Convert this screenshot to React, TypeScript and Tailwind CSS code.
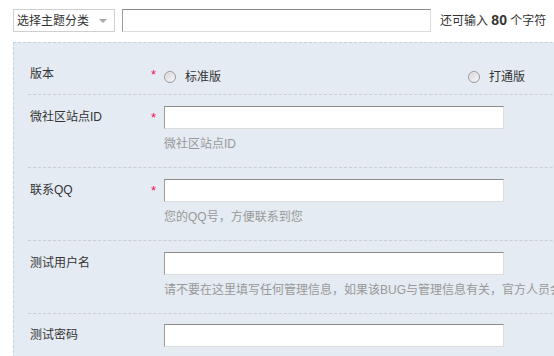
import React from 'react';

const FONT = 'font-["Liberation_Sans","Noto_Sans_CJK_SC",sans-serif]';

function Radio({ label }: { label: string }) {
    return (
        <label className="flex items-center">
            <span className="w-[12px] h-[12px] rounded-full border border-[#9a9a9a] bg-gradient-to-br from-[#d4d4d4] to-[#fafafa] shadow-[inset_0_0_0_1px_#eee]" />
            <span className="ml-[9px]">{label}</span>
        </label>
    );
}

function TextInput() {
    return (
        <div className="w-[340px] h-[23px] bg-white border border-t-[#8a8a8a] border-l-[#9c9c9c] border-r-[#dcdcdc] border-b-[#dcdcdc]" />
    );
}

function Row({
    label,
    required,
    hint,
    children,
    className = '',
}: {
    label: string;
    required?: boolean;
    hint?: string;
    children: React.ReactNode;
    className?: string;
}) {
    return (
        <div className={`flex border-b border-dashed border-[#c9ced4] ${className}`}>
            <div className="w-[123px] shrink-0 pl-[2px] leading-[23px] text-[#333]">{label}</div>
            <div className="w-[13px] shrink-0 leading-[23px] text-[#f0145a] text-[13px]">{required ? '*' : ''}</div>
            <div className="flex-1 min-w-0">
                {children}
                {hint && <div className="mt-[6px] leading-[18px] text-[#999] whitespace-nowrap">{hint}</div>}
            </div>
        </div>
    );
}

export default function App() {
    return (
        <div className={`w-[554px] h-[356px] overflow-hidden bg-white text-[12px] text-[#333] ${FONT}`}>
            {/* 标题行 */}
            <div className="flex items-center pt-[9px] pl-[13px]">
                <div className="w-[102px] h-[23px] border border-[#cfcfcf] flex items-center justify-between pl-[3px] pr-[7px] text-[#333]">
                    <span>选择主题分类</span>
                    <span className="w-0 h-0 border-l-[4px] border-r-[4px] border-t-[4px] border-l-transparent border-r-transparent border-t-[#a8a8a8]" />
                </div>
                <div className="ml-[7px] w-[309px] h-[23px] bg-white border border-t-[#8a8a8a] border-l-[#9c9c9c] border-r-[#dcdcdc] border-b-[#dcdcdc]" />
                <div className="ml-[9px] text-[#333]">
                    还可输入 <b className="text-[14px]">80</b> 个字符
                </div>
            </div>

            {/* 表单面板 */}
            <div className="mt-[10px] ml-[13px] w-[640px] border-l border-t border-dashed border-[#c3d3e3] bg-[#e4ebf2] pl-[14px]">
                <Row label="版本" required className="pt-[20px] pb-[8px]">
                    <div className="flex items-center h-[23px] pt-[4px]">
                        <div className="w-[304px]">
                            <Radio label="标准版" />
                        </div>
                        <Radio label="打通版" />
                    </div>
                </Row>
                <Row label="微社区站点ID" required hint="微社区站点ID" className="pt-[11px] pb-[14px]">
                    <TextInput />
                </Row>
                <Row label="联系QQ" required hint="您的QQ号，方便联系到您" className="pt-[11px] pb-[14px]">
                    <TextInput />
                </Row>
                <Row
                    label="测试用户名"
                    hint="请不要在这里填写任何管理信息，如果该BUG与管理信息有关，官方人员会在需要时与您联系"
                    className="pt-[11px] pb-[14px]"
                >
                    <TextInput />
                </Row>
                <Row label="测试密码" className="pt-[10px] pb-[10px]">
                    <TextInput />
                </Row>
            </div>
        </div>
    );
}
